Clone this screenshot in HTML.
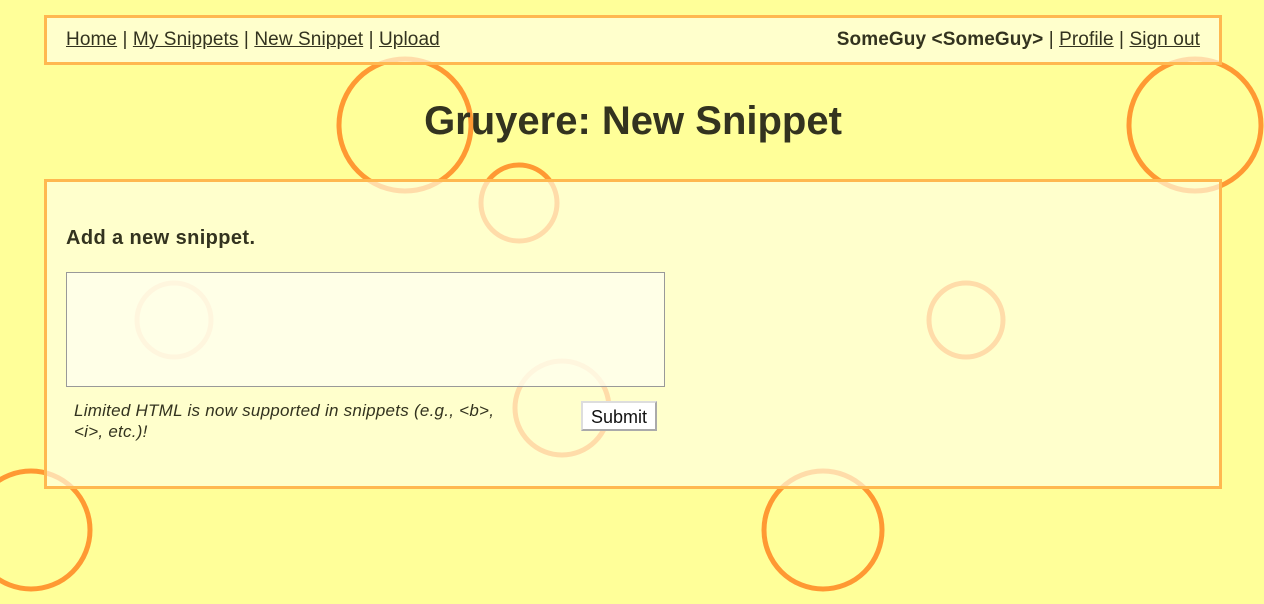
<!DOCTYPE html>
<html><head><style>
html,body{margin:0;padding:0;width:1264px;height:604px;overflow:hidden;background:#ffff99;font-family:"Liberation Sans",Arial,sans-serif;color:#33331f;}
svg.bg{position:absolute;left:0;top:0;}
.box{position:absolute;left:44px;width:1172px;border:3px solid #ffb850;background:rgba(255,255,230,0.66);}
#nav{top:15px;height:44px;font-size:19px;letter-spacing:0.1px;}
#nav .l{position:absolute;left:19px;top:11px;}
#nav .r{position:absolute;right:19px;top:11px;}
a{color:#33331f;text-decoration:underline;}
h1{position:absolute;left:0;width:1266px;text-align:center;top:99px;margin:0;font-size:40px;font-weight:bold;letter-spacing:0;}
#main{top:179px;height:304px;}
h3{position:absolute;left:19px;top:45px;margin:0;font-size:20px;letter-spacing:0.4px;}
.ta{position:absolute;left:19px;top:90px;width:597px;height:113px;border:1px solid #999;background:rgba(255,255,240,0.75);}
.note{position:absolute;left:27px;top:218px;width:445px;font-style:italic;font-size:17px;line-height:21px;letter-spacing:0.25px;}
.btn{position:absolute;left:534px;top:219px;width:76px;height:30px;border:2px solid #aaa;border-top-color:#ddd;border-left-color:#ddd;background:#fff;font-size:18px;text-align:center;line-height:28px;box-sizing:border-box;color:#111;}
</style></head><body>
<svg class="bg" width="1264" height="604" fill="none" stroke="#ff9933" stroke-width="5">
<circle cx="405" cy="125" r="66"/>
<circle cx="1195" cy="125" r="66"/>
<circle cx="519" cy="203" r="38"/>
<circle cx="174" cy="320" r="37"/>
<circle cx="966" cy="320" r="37"/>
<circle cx="562" cy="408" r="47"/>
<circle cx="31" cy="530" r="59"/>
<circle cx="823" cy="530" r="59"/>
</svg>
<div class="box" id="nav">
<div class="l"><a>Home</a> | <a>My Snippets</a> | <a>New Snippet</a> | <a>Upload</a></div>
<div class="r"><b>SomeGuy &lt;SomeGuy&gt;</b> | <a>Profile</a> | <a>Sign out</a></div>
</div>
<h1>Gruyere: New Snippet</h1>
<div class="box" id="main">
<h3>Add a new snippet.</h3>
<div class="ta"></div>
<div class="note">Limited HTML is now supported in snippets (e.g., &lt;b&gt;, &lt;i&gt;, etc.)!</div>
<div class="btn">Submit</div>
</div>
</body></html>
